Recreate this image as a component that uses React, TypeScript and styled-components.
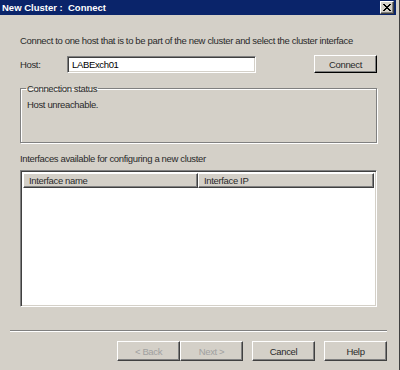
import React from 'react';
import styled, { createGlobalStyle, css } from 'styled-components';

const GlobalStyle = createGlobalStyle`
  html, body {
    margin: 0;
    padding: 0;
    background: #d4d0c8;
  }
  body {
    font-family: "Liberation Sans", Arial, sans-serif;
    font-size: 9.5px;
    letter-spacing: -0.35px;
    color: #2a2a2a;
  }
`;

const raised = css`
  border: 1px solid;
  border-color: #ffffff #404040 #404040 #ffffff;
  box-shadow: inset -1px -1px 0 #808080, inset 1px 1px 0 #d4d0c8;
`;

const sunken = css`
  border: 1px solid;
  border-color: #808080 #ffffff #ffffff #808080;
  box-shadow: inset 1px 1px 0 #404040, inset -1px -1px 0 #d4d0c8;
`;

const Window = styled.div`
  width: 400px;
  height: 370px;
  box-sizing: border-box;
  display: flex;
  flex-direction: column;
  background: #d4d0c8;
  border-right: 1px solid #404040;
  overflow: hidden;
`;

const TitleBar = styled.div`
  height: 16px;
  margin-right: 3px;
  display: flex;
  align-items: center;
  justify-content: space-between;
  padding: 0 2px 0 2px;
  background: #0a246a;
  color: #ffffff;
  font-weight: bold;
  font-size: 9.5px;
  letter-spacing: 0;
`;

const CloseButton = styled.div`
  width: 12px;
  height: 11px;
  ${raised}
  background: #d4d0c8;
  display: flex;
  align-items: center;
  justify-content: center;
`;

const Body = styled.div`
  flex: 1;
  display: flex;
  flex-direction: column;
  padding: 0 22px 0 20px;
`;

const Intro = styled.div`
  margin-top: 20px;
  height: 12px;
  line-height: 12px;
  white-space: nowrap;
`;

const HostRow = styled.div`
  margin-top: 8px;
  display: flex;
  align-items: center;
  height: 18px;
`;

const Label = styled.span`
  width: 47px;
`;

const TextBox = styled.div`
  width: 189px;
  height: 17px;
  box-sizing: border-box;
  ${sunken}
  background: #ffffff;
  color: #000;
  padding: 0 4px;
  line-height: 15px;
`;

const Button = styled.div<{ $disabled?: boolean; $default?: boolean }>`
  width: 63px;
  height: 20px;
  box-sizing: border-box;
  ${raised}
  display: flex;
  align-items: center;
  justify-content: center;
  color: ${p => (p.$disabled ? '#a0a0a0' : '#2a2a2a')};
  ${p => p.$default && 'border-color: #ffffff #000 #000 #ffffff;'}
`;

const ConnectButton = styled(Button)`
  margin-left: auto;
  height: 18px;
`;

const GroupBox = styled.fieldset`
  margin: 10px 0 0 0;
  padding: 2px 6px 0 6px;
  height: 60px;
  box-sizing: border-box;
  border: 1px solid #808080;
  box-shadow: 1px 1px 0 #ffffff, inset 1px 1px 0 #ffffff;
  border-radius: 0;
  legend {
    padding: 0 1px;
    margin-left: -1px;
    line-height: 11px;
  }
`;

const StatusText = styled.div`
  padding-top: 3px;
  line-height: 12px;
`;

const SectionLabel = styled.div`
  margin-top: 10px;
  line-height: 12px;
`;

const ListView = styled.div`
  margin-top: 5px;
  height: 137px;
  box-sizing: border-box;
  ${sunken}
  background: #ffffff;
  padding: 2px;
`;

const HeaderRow = styled.div`
  display: flex;
  height: 15px;
`;

const HeaderCell = styled.div<{ $w?: number }>`
  ${p => (p.$w ? `width: ${p.$w}px;` : 'flex: 1;')}
  box-sizing: border-box;
  ${raised}
  background: #d4d0c8;
  padding-left: 5px;
  line-height: 13px;
`;

const Separator = styled.div`
  margin: 23px 12px 0 10px;
  height: 1px;
  background: #808080;
  border-bottom: 1px solid #ffffff;
`;

const Footer = styled.div`
  display: flex;
  justify-content: flex-end;
  gap: 9px;
  padding: 9px 12px 9px 0;
`;

const Pair = styled.div`
  display: flex;
`;

export default function App() {
  return (
    <>
      <GlobalStyle />
      <Window>
        <TitleBar>
          <span>New Cluster :&nbsp; Connect</span>
          <CloseButton>
            <svg width="8" height="7" viewBox="0 0 8 7">
              <path d="M0 0 L7 7 M1 0 L8 7 M7 0 L0 7 M8 0 L1 7" stroke="#000" strokeWidth="1" />
            </svg>
          </CloseButton>
        </TitleBar>
        <Body>
          <Intro>Connect to one host that is to be part of the new cluster and select the cluster interface</Intro>
          <HostRow>
            <Label>Host:</Label>
            <TextBox>LABExch01</TextBox>
            <ConnectButton $default>Connect</ConnectButton>
          </HostRow>
          <GroupBox>
            <legend>Connection status</legend>
            <StatusText>Host unreachable.</StatusText>
          </GroupBox>
          <SectionLabel>Interfaces available for configuring a new cluster</SectionLabel>
          <ListView>
            <HeaderRow>
              <HeaderCell $w={175}>Interface name</HeaderCell>
              <HeaderCell>Interface IP</HeaderCell>
            </HeaderRow>
          </ListView>
        </Body>
        <Separator />
        <Footer>
          <Pair>
            <Button $disabled>&lt; Back</Button>
            <Button $disabled>Next &gt;</Button>
          </Pair>
          <Button>Cancel</Button>
          <Button>Help</Button>
        </Footer>
      </Window>
    </>
  );
}
